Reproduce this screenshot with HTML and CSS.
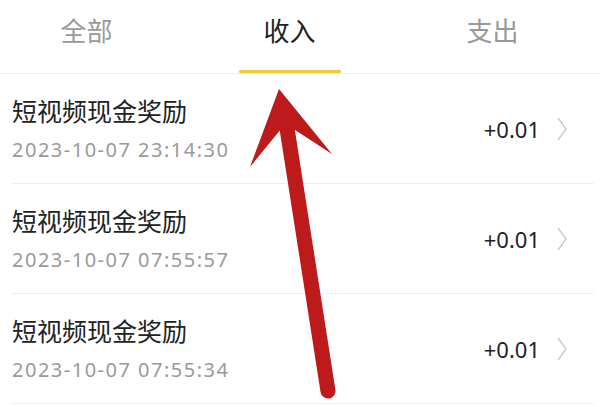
FILE: index.html
```html
<!DOCTYPE html>
<html lang="zh-CN">
<head>
    <meta charset="UTF-8">
    <meta name="viewport" content="width=device-width, initial-scale=1.0">
    <title>收支明细</title>
    <link rel="stylesheet" href="styles.css">
</head>
<body>
    <div class="page">
        <nav class="tabs">
            <div class="tab">全部</div>
            <div class="tab active">收入</div>
            <div class="tab">支出</div>
        </nav>

        <ul class="records">
            <li class="record">
                <div class="info">
                    <div class="title">短视频现金奖励</div>
                    <div class="time">2023-10-07 23:14:30</div>
                </div>
                <div class="amount">+0.01</div>
                <svg class="chevron" viewBox="0 0 10 24"><path d="M1 1 L9 12 L1 23" /></svg>
            </li>
            <li class="record">
                <div class="info">
                    <div class="title">短视频现金奖励</div>
                    <div class="time">2023-10-07 07:55:57</div>
                </div>
                <div class="amount">+0.01</div>
                <svg class="chevron" viewBox="0 0 10 24"><path d="M1 1 L9 12 L1 23" /></svg>
            </li>
            <li class="record">
                <div class="info">
                    <div class="title">短视频现金奖励</div>
                    <div class="time">2023-10-07 07:55:34</div>
                </div>
                <div class="amount">+0.01</div>
                <svg class="chevron" viewBox="0 0 10 24"><path d="M1 1 L9 12 L1 23" /></svg>
            </li>
        </ul>

        <!-- red annotation arrow drawn over the list -->
        <svg class="arrow" viewBox="0 0 600 407">
            <line x1="286" y1="122" x2="328" y2="391" />
            <path d="M279 89 L250 167 L281 129 L295 130 L332 154 Z" />
        </svg>
    </div>
</body>
</html>
```

FILE: styles.css
```css
body, html {
    margin: 0;
    padding: 0;
    background-color: #fff;
    font-family: "Noto Sans CJK SC", "Noto Sans", sans-serif;
    overflow: hidden;
}
.page {
    position: relative;
    width: 600px;
    height: 407px;
}
.tabs {
    display: flex;
    margin-left: -15px;
    height: 73px;
    border-bottom: 1px solid #efefef;
}
.tab {
    width: 203px;
    flex: none;
    display: flex;
    justify-content: center;
    padding-top: 10px;
    font-size: 26px;
    line-height: 40px;
    color: #999;
    position: relative;
}
.tab.active {
    color: #222;
}
.tab.active::after {
    content: "";
    position: absolute;
    left: 50%;
    bottom: 0;
    width: 102px;
    height: 3px;
    margin-left: -51px;
    background-color: #efc92f;
    border-radius: 2px;
}
.records {
    list-style: none;
    margin: 0;
    padding: 0;
}
.record {
    display: flex;
    align-items: center;
    margin-left: 12px;
    margin-right: 6px;
    padding: 20px 27px 19px 0;
    border-bottom: 1px solid #efefef;
}
.info {
    flex: 1;
}
.title {
    font-size: 25px;
    line-height: 32px;
    color: #222;
}
.time {
    margin-top: 10px;
    font-family: "Noto Sans", sans-serif;
    font-size: 20px;
    letter-spacing: 1.5px;
    line-height: 28px;
    color: #9a9a9a;
}
.amount {
    font-family: "Noto Sans", sans-serif;
    font-size: 22px;
    color: #222;
    margin-right: 17px;
}
.chevron {
    width: 10px;
    height: 24px;
    fill: none;
    stroke: #c8c8c8;
    stroke-width: 1.3;
}
.arrow {
    position: absolute;
    left: 0;
    top: 0;
    width: 600px;
    height: 407px;
    pointer-events: none;
}
.arrow line {
    stroke: #bd1a1c;
    stroke-width: 15;
    stroke-linecap: round;
}
.arrow path {
    fill: #bd1a1c;
}
```
